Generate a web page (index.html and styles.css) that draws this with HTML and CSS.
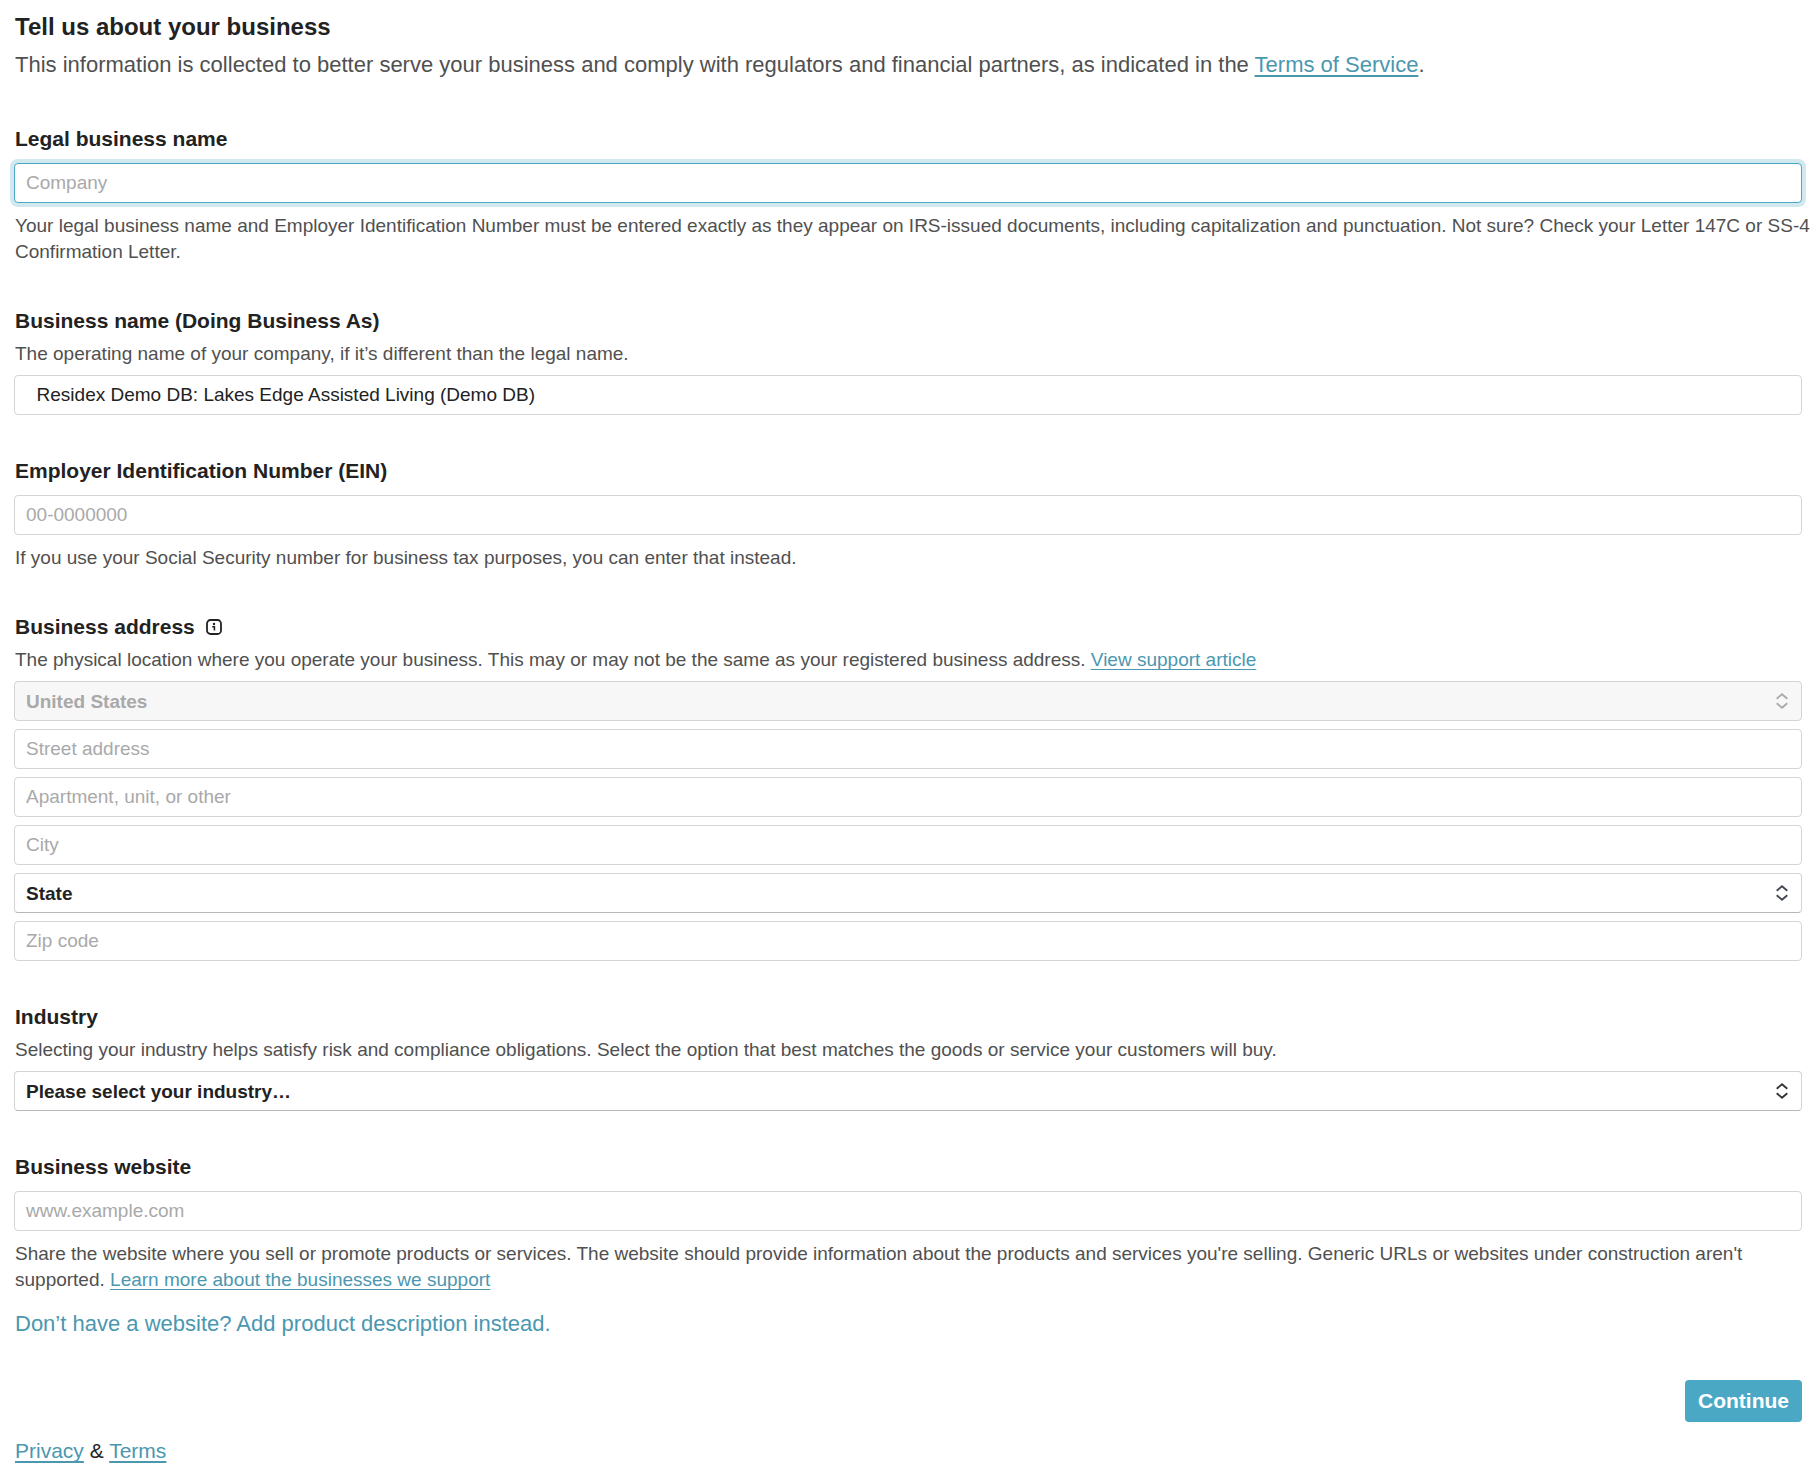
FILE: index.html
```html
<!DOCTYPE html>
<html lang="en">
<head>
  <meta charset="UTF-8" />
  <meta name="viewport" content="width=device-width, initial-scale=1.0" />
  <title>Tell us about your business</title>
  <link rel="stylesheet" href="styles.css">
</head>
<body>
  <form class="business-form">
    <header class="intro">
      <h1>Tell us about your business</h1>
      <p>This information is collected to better serve your business and comply with regulators and financial partners, as indicated in the <a href="#">Terms of Service</a>.</p>
    </header>

    <div class="field">
      <label class="title" for="legal-name">Legal business name</label>
      <input class="control focused" type="text" id="legal-name" placeholder="Company" />
      <p class="help below">Your legal business name and Employer Identification Number must be entered exactly as they appear on IRS-issued documents, including capitalization and punctuation. Not sure? Check your Letter 147C or <span class="nowrap">SS-4</span> Confirmation Letter.</p>
    </div>

    <div class="field">
      <label class="title" for="dba">Business name (Doing Business As)</label>
      <p class="help above">The operating name of your company, if it’s different than the legal name.</p>
      <input class="control" type="text" id="dba" value="  Residex Demo DB: Lakes Edge Assisted Living (Demo DB)" />
    </div>

    <div class="field">
      <label class="title" for="ein">Employer Identification Number (EIN)</label>
      <input class="control" type="text" id="ein" placeholder="00-0000000" />
      <p class="help below">If you use your Social Security number for business tax purposes, you can enter that instead.</p>
    </div>

    <div class="field">
      <div class="title-row">
        <label class="title" for="street">Business address</label>
        <svg class="info" width="16" height="16" viewBox="0 0 16 16">
          <rect x="1" y="1" width="14" height="14" rx="3.5" fill="none" stroke="#222" stroke-width="1.8" />
          <circle cx="8" cy="5" r="1.2" fill="#222" />
          <path d="M6.2 7.8H8.4V11.6" fill="none" stroke="#222" stroke-width="1.6" />
        </svg>
      </div>
      <p class="help above">The physical location where you operate your business. This may or may not be the same as your registered business address. <a href="#">View support article</a></p>
      <div class="address">
        <div class="select disabled">
          <select class="control" aria-label="Country" disabled>
            <option>United States</option>
          </select>
          <svg class="arrows" width="12" height="16" viewBox="0 0 12 16"><path d="M.7 5.8 6 1.2 11.3 5.8M.7 10.2 6 14.8 11.3 10.2" /></svg>
        </div>
        <input class="control" type="text" id="street" placeholder="Street address" />
        <input class="control" type="text" aria-label="Apartment" placeholder="Apartment, unit, or other" />
        <input class="control" type="text" aria-label="City" placeholder="City" />
        <div class="select state">
          <select class="control" aria-label="State">
            <option>State</option>
          </select>
          <svg class="arrows" width="12" height="16" viewBox="0 0 12 16"><path d="M.7 5.8 6 1.2 11.3 5.8M.7 10.2 6 14.8 11.3 10.2" /></svg>
        </div>
        <input class="control" type="text" aria-label="Zip code" placeholder="Zip code" />
      </div>
    </div>

    <div class="field">
      <label class="title" for="industry">Industry</label>
      <p class="help above">Selecting your industry helps satisfy risk and compliance obligations. Select the option that best matches the goods or service your customers will buy.</p>
      <div class="select">
        <select class="control" id="industry">
          <option>Please select your industry…</option>
        </select>
        <svg class="arrows" width="12" height="16" viewBox="0 0 12 16"><path d="M.7 5.8 6 1.2 11.3 5.8M.7 10.2 6 14.8 11.3 10.2" /></svg>
      </div>
    </div>

    <div class="field">
      <label class="title" for="website">Business website</label>
      <input class="control" type="text" id="website" placeholder="www.example.com" />
      <p class="help below">Share the website where you sell or promote products or services. The website should provide information about the products and services you're selling. Generic URLs or websites under construction aren't supported. <a href="#">Learn more about the businesses we support</a></p>
      <button class="no-website" type="button">Don’t have a website? Add product description instead.</button>
    </div>

    <div class="actions">
      <button class="continue" type="submit">Continue</button>
    </div>
  </form>

  <footer class="legal">
    <a href="#">Privacy</a> &amp; <a href="#">Terms</a>
  </footer>
</body>
</html>
```
FILE: styles.css
```css
* {
  margin: 0;
  padding: 0;
  box-sizing: border-box;
  font-family: "Liberation Sans", Arial, sans-serif;
}
body {
  padding: 13px 18px 14px 14px;
  background: #fff;
  color: #222;
  font-size: 21px;
  line-height: 28px;
}
a {
  color: #4b97b0;
  text-decoration: underline;
  text-decoration-thickness: 2px;
  text-underline-offset: 3px;
  text-decoration-skip-ink: none;
}
.business-form {
  display: flex;
  flex-direction: column;
  gap: 42px;
}
.intro {
  padding-left: 1px;
  margin-bottom: 4px;
  font-size: 22px;
  color: #505050;
}
.intro h1 {
  margin-bottom: 10px;
  font-size: 24px;
  color: #222;
}
.field {
  display: flex;
  flex-direction: column;
}
.title {
  padding-left: 1px;
  font-weight: bold;
}
.title-row {
  display: flex;
  align-items: center;
  gap: 11px;
}
/* help text may run a little past the inputs */
.help {
  margin-right: -10px;
  padding-left: 1px;
  font-size: 19px;
  line-height: 26px;
  color: #505050;
}
.help a {
  text-decoration-thickness: 1px;
}
.nowrap {
  white-space: nowrap;
}
.above {
  margin-top: 6px;
  margin-bottom: 8px;
}
.below {
  margin-top: 10px;
}
.control {
  width: 100%;
  height: 40px;
  padding: 0 11px;
  border: 1px solid #d4d4d4;
  border-radius: 4px;
  background: #fff;
  color: #222;
  font-size: 19px;
  outline: none;
}
.title + .control {
  margin-top: 10px;
}
.control::placeholder {
  color: #a9a9a9;
}
.focused {
  border-color: #4aa8c5;
  box-shadow: 0 0 0 4px #d2e8ef;
}
.address {
  display: flex;
  flex-direction: column;
  gap: 8px;
}
.select {
  position: relative;
}
.select .control {
  display: block;
  appearance: none;
  font-weight: bold;
  border-bottom-color: #b8b8b8;
}
/* up/down chevrons over the right end of the select */
.arrows {
  position: absolute;
  right: 14px;
  top: 12px;
  pointer-events: none;
  fill: none;
  stroke: #333;
  stroke-width: 1.8;
}
.state .arrows {
  stroke: #414552;
}
.disabled .arrows {
  stroke: #a9a9a9;
}
.disabled .control {
  background: #f7f7f7;
  border-bottom-color: #d4d4d4;
  color: #a9a9a9;
  opacity: 1;
}
button {
  border: none;
  cursor: pointer;
  font-size: 21px;
  line-height: 28px;
}
.no-website {
  align-self: flex-start;
  margin-top: 17px;
  padding-left: 1px;
  background: none;
  color: #4b97b0;
  font-size: 22px;
}
.actions {
  display: flex;
  justify-content: flex-end;
}
.continue {
  padding: 7px 13px;
  border-radius: 4px;
  background: #4aa8c5;
  color: #fff;
  font-weight: bold;
}
.legal {
  margin-top: 15px;
  padding-left: 1px;
}
```
